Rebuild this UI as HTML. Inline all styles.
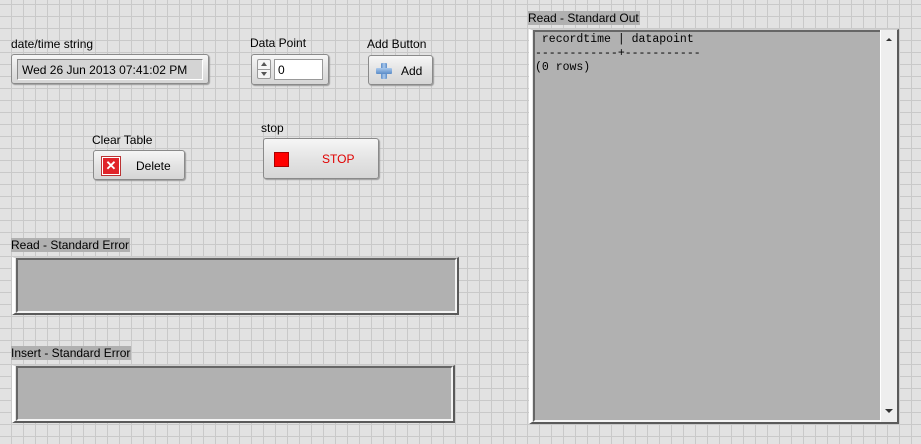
<!DOCTYPE html>
<html><head><meta charset="utf-8"><style>
*{box-sizing:border-box;margin:0;padding:0}
body{width:921px;height:444px;overflow:hidden;position:relative;font-family:"Liberation Sans",sans-serif;font-size:12px;color:#000;
background-color:#e2e2e2;
background-image:linear-gradient(to right,#c9c9c9 1px,transparent 1px),linear-gradient(to bottom,#c9c9c9 1px,transparent 1px);
background-size:12px 12px;background-position:11px 4px;}
.a{position:absolute}
.lbl{position:absolute;font-size:12px;line-height:14px;white-space:nowrap}
.hl{background:#b0b0b0}
.btn{position:absolute;border:1px solid #8a8a8a;border-radius:3px;background:linear-gradient(#f6f6f6,#e4e4e4 50%,#d6d6d6);box-shadow:1px 1px 1px #9a9a9a}
.box{position:absolute;background:#b1b1b1;border-top:2px solid #666;border-left:2px solid #666;border-right:2px solid #f4f4f4;border-bottom:2px solid #f4f4f4;}
.frame{position:absolute;border:1px solid #d0d0d0;border-right:2px solid #5a5a5a;border-bottom:2px solid #5a5a5a;border-left:3px solid #fff;background:#e4e4e4}
</style></head><body>
<div class="lbl" style="left:11px;top:37px">date/time string</div>
<div class="btn" style="left:11px;top:54px;width:198px;height:30px">
  <div class="a" style="left:5px;top:4px;width:186px;height:21px;background:#d4d4d4;border-top:1px solid #888;border-left:1px solid #888;border-bottom:1px solid #fff;border-right:1px solid #fff;padding:3px 0 0 4px;font-size:12px">Wed 26 Jun 2013 07:41:02 PM</div>
</div>

<div class="lbl" style="left:250px;top:36px">Data Point</div>
<div class="btn" style="left:251px;top:54px;width:78px;height:31px">
  <div class="a" style="left:5px;top:4px;width:14px;height:20px;border:1px solid #999;background:#f4f4f4;border-radius:2px">
    <div class="a" style="left:3px;top:2px;width:0;height:0;border-left:3px solid transparent;border-right:3px solid transparent;border-bottom:4px solid #555"></div>
    <div class="a" style="left:0;top:9px;width:12px;height:1px;background:#999"></div>
    <div class="a" style="left:3px;top:12px;width:0;height:0;border-left:3px solid transparent;border-right:3px solid transparent;border-top:4px solid #555"></div>
  </div>
  <div class="a" style="left:22px;top:4px;width:49px;height:21px;background:#fff;border:1px solid #999;padding:3px 0 0 3px">0</div>
</div>

<div class="lbl" style="left:367px;top:37px">Add Button</div>
<div class="btn" style="left:368px;top:55px;width:65px;height:30px">
  <div class="a" style="left:12px;top:7px;width:6px;height:16px;background:linear-gradient(90deg,#5b8cc8,#a9c8ec,#5b8cc8);border-radius:1px"></div>
  <div class="a" style="left:7px;top:12px;width:16px;height:6px;background:linear-gradient(#a9c8ec,#5b8cc8);border-radius:1px"></div>
  <div class="a" style="left:32px;top:8px;font-size:12px">Add</div>
</div>

<div class="lbl" style="left:92px;top:133px">Clear Table</div>
<div class="btn" style="left:93px;top:150px;width:92px;height:30px">
  <div class="a" style="left:8px;top:6px;width:18px;height:18px;background:#e0242a;border:1px solid #fff;box-shadow:0 0 0 1px #b33;color:#fff;font-weight:bold;font-size:13px;line-height:16px;text-align:center">✕</div>
  <div class="a" style="left:42px;top:8px">Delete</div>
</div>

<div class="lbl" style="left:261px;top:121px">stop</div>
<div class="btn" style="left:263px;top:138px;width:116px;height:41px">
  <div class="a" style="left:10px;top:13px;width:15px;height:15px;background:#f00;border:1px solid #a00"></div>
  <div class="a" style="left:58px;top:13px;color:#e00000">STOP</div>
</div>

<div class="lbl hl" style="left:11px;top:238px;padding-right:1px">Read - Standard Error</div>
<div class="frame" style="left:12px;top:257px;width:447px;height:58px"><div class="box" style="left:1px;top:0;width:441px;height:55px"></div></div>

<div class="lbl hl" style="left:11px;top:346px;padding-right:1px">Insert - Standard Error</div>
<div class="frame" style="left:12px;top:365px;width:443px;height:58px"><div class="box" style="left:1px;top:0;width:437px;height:55px"></div></div>

<div class="lbl hl" style="left:528px;top:11px;padding-right:1px">Read - Standard Out</div>
<div class="frame" style="left:529px;top:29px;width:370px;height:395px">
  <div class="box" style="left:1px;top:0;width:347px;height:392px;border-right:none;border-bottom:2px solid #f4f4f4"></div>
  <pre class="a" style="left:3px;top:3px;font-family:'Liberation Mono',monospace;font-size:11.5px;line-height:14px"> recordtime | datapoint
------------+-----------
(0 rows)</pre>
  <div class="a" style="left:348px;top:0;width:17px;height:392px;background:#eeeeee;border-left:1px solid #fff">
    <div class="a" style="left:5px;top:8px;width:0;height:0;border-left:3px solid transparent;border-right:3px solid transparent;border-bottom:3px solid #333"></div>
    <div class="a" style="left:4px;top:379px;width:0;height:0;border-left:4px solid transparent;border-right:4px solid transparent;border-top:4px solid #333"></div>
  </div>
</div>
</body></html>
